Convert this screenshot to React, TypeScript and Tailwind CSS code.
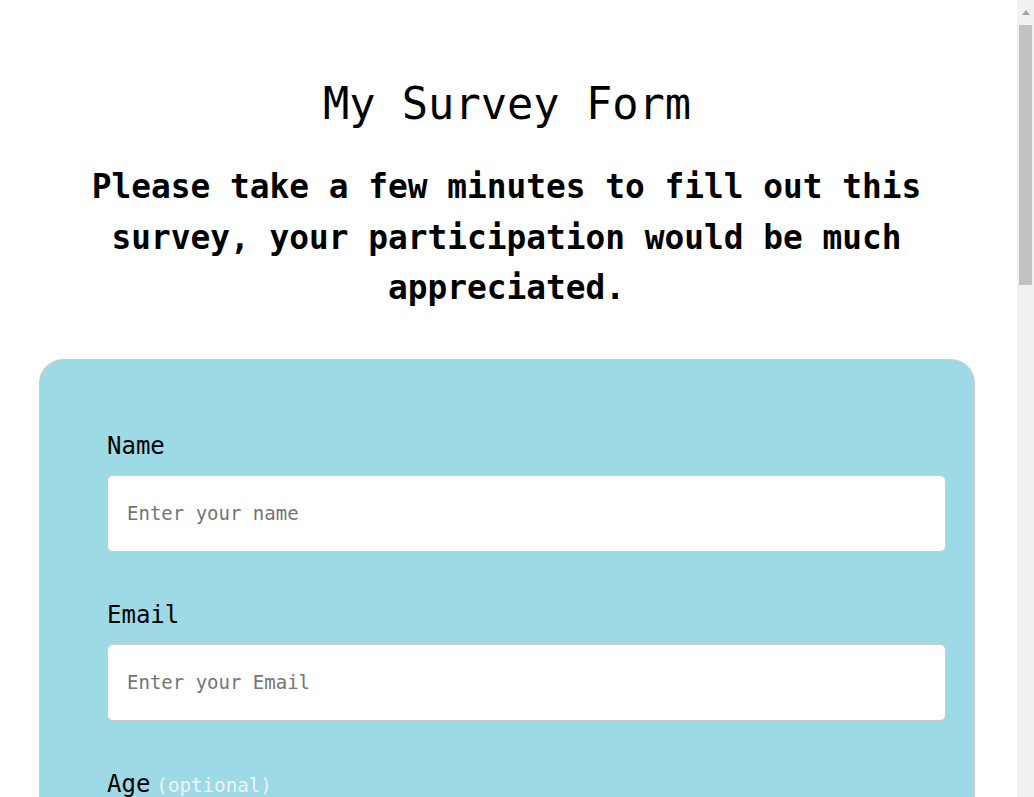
import React from "react";

function Field({ label, hint, placeholder, type = "text" }: { label: string; hint?: string; placeholder: string; type?: string }) {
  return (
    <div className="flex flex-col mb-[49px]">
      <label className="text-[24px] leading-[28px] text-black">
        {label}
        {hint && <span className="ml-[6px] text-[19.2px] text-[#eef3f5]">{hint}</span>}
      </label>
      <input
        type={type}
        placeholder={placeholder}
        className="mt-[15px] h-[77px] w-full rounded-[6px] border border-[#cccccc] bg-white px-[19px] text-[19px] text-black placeholder:text-[#757575] outline-none"
      />
    </div>
  );
}

function Scrollbar() {
  return (
    <div className="flex w-[17px] shrink-0 flex-col bg-[#f1f1f1]">
      <div className="flex h-[17px] items-end justify-center pb-[2px]">
        <div className="h-0 w-0 border-x-[4px] border-b-[5px] border-x-transparent border-b-[#a3a3a3]" />
      </div>
      <div className="mx-[2px] mt-[8px] h-[260px] bg-[#c1c1c1]" />
    </div>
  );
}

export default function App() {
  return (
    <div className="flex h-screen w-full overflow-hidden bg-white text-black font-['DejaVu_Sans_Mono',monospace]">
      <div className="min-w-0 flex-1 overflow-hidden pb-[80px]">
        <h1 className="pt-[78px] pr-[3px] text-center text-[43.7px] leading-[51px] font-normal">My Survey Form</h1>
        <p className="mx-auto mt-[33px] max-w-[900px] -translate-x-[2px] text-center text-[32.8px] leading-[50.5px] font-bold">
          Please take a few minutes to fill out this survey, your participation would be much appreciated.
        </p>

        <form className="ml-[39px] mt-[45px] w-[936px] rounded-[24px] border border-[#d2cccc] bg-[#9ed9e6] pl-[67px] pr-[28px] pt-[72px] pb-[70px]">
          <Field label="Name" placeholder="Enter your name" />
          <Field label="Email" placeholder="Enter your Email" type="email" />
          <Field label="Age" hint="(optional)" placeholder="Enter your age" type="number" />

          <div className="flex flex-col mb-[49px]">
            <label className="text-[24px] leading-[28px]">Which option best describes your current role?</label>
            <select className="mt-[15px] h-[77px] w-full rounded-[6px] border border-[#cccccc] bg-white px-[19px] text-[19px]">
              <option>Select current role</option>
              <option>Student</option>
              <option>Full Time Job</option>
              <option>Prefer not to say</option>
            </select>
          </div>

          <button type="button" className="h-[60px] w-full rounded-[6px] bg-[#37af65] text-[22px] text-white">
            Submit
          </button>
        </form>
      </div>
      <Scrollbar />
    </div>
  );
}
